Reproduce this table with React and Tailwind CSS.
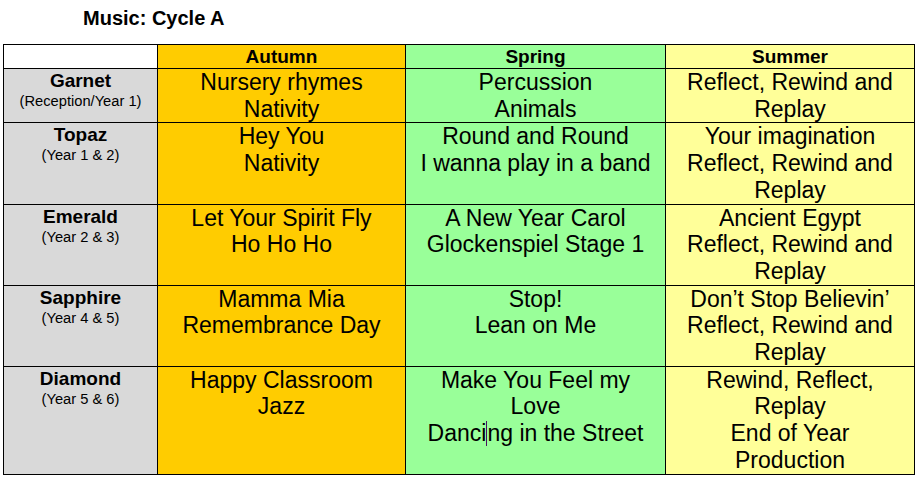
const rows = [
  {
    name: 'Garnet',
    sub: '(Reception/Year 1)',
    autumn: ['Nursery rhymes', 'Nativity'],
    spring: ['Percussion', 'Animals'],
    summer: ['Reflect, Rewind and', 'Replay'],
  },
  {
    name: 'Topaz',
    sub: '(Year 1 & 2)',
    autumn: ['Hey You', 'Nativity'],
    spring: ['Round and Round', 'I wanna play in a band'],
    summer: ['Your imagination', 'Reflect, Rewind and', 'Replay'],
  },
  {
    name: 'Emerald',
    sub: '(Year 2 & 3)',
    autumn: ['Let Your Spirit Fly', 'Ho Ho Ho'],
    spring: ['A New Year Carol', 'Glockenspiel Stage 1'],
    summer: ['Ancient Egypt', 'Reflect, Rewind and', 'Replay'],
  },
  {
    name: 'Sapphire',
    sub: '(Year 4 & 5)',
    autumn: ['Mamma Mia', 'Remembrance Day'],
    spring: ['Stop!', 'Lean on Me'],
    summer: ['Don\u2019t Stop Believin\u2019', 'Reflect, Rewind and', 'Replay'],
  },
  {
    name: 'Diamond',
    sub: '(Year 5 & 6)',
    autumn: ['Happy Classroom', 'Jazz'],
    spring: ['Make You Feel my', 'Love', 'DANCING'],
    summer: ['Rewind, Reflect,', 'Replay', 'End of Year', 'Production'],
  },
];

function Line({ text }) {
  // the caret left in the word "Dancing"
  if (text === 'DANCING') {
    return (
      <div>
        Danci
        <span className="inline-block w-0 h-[25px] border-l border-[#4a1060] align-[-5px]" />
        ng in the Street
      </div>
    );
  }
  return <div>{text}</div>;
}

function Cell({ lines, bg }) {
  return (
    <td className={`border border-black align-top text-center p-0 text-[23px] leading-[26.7px] ${bg}`}>
      {lines.map((t, i) => (
        <Line key={i} text={t} />
      ))}
    </td>
  );
}

export default function App() {
  return (
    <div
      className="w-[921px] h-[482px] bg-white text-black overflow-hidden pt-[7px]"
      style={{ fontFamily: '"Liberation Sans", Arial, sans-serif' }}
    >
      <h1 className="ml-[83px] text-[20px] leading-[23px] font-bold mb-[14px]">Music: Cycle A</h1>

      <table className="ml-[3px] w-[911px] table-fixed border-collapse border border-black">
        <colgroup>
          <col className="w-[154px]" />
          <col className="w-[248px]" />
          <col className="w-[260px]" />
          <col className="w-[249px]" />
        </colgroup>
        <thead>
          <tr className="text-[19px] font-bold leading-[22px]">
            <th className="border border-black bg-white p-0 h-[24px]" />
            <th className="border border-black bg-[#ffcc00] p-0 pt-[1px]">Autumn</th>
            <th className="border border-black bg-[#99ff99] p-0 pt-[1px]">Spring</th>
            <th className="border border-black bg-[#ffff99] p-0 pt-[1px]">Summer</th>
          </tr>
        </thead>
        <tbody>
          {rows.map((r) => (
            <tr key={r.name}>
              <td className="border border-black bg-[#d9d9d9] align-top text-center p-0 pt-[1px]">
                <div className="text-[19px] font-bold leading-[22px]">{r.name}</div>
                <div className="text-[14.7px] leading-[18px]">{r.sub}</div>
              </td>
              <Cell lines={r.autumn} bg="bg-[#ffcc00]" />
              <Cell lines={r.spring} bg="bg-[#99ff99]" />
              <Cell lines={r.summer} bg="bg-[#ffff99]" />
            </tr>
          ))}
        </tbody>
      </table>
    </div>
  );
}
